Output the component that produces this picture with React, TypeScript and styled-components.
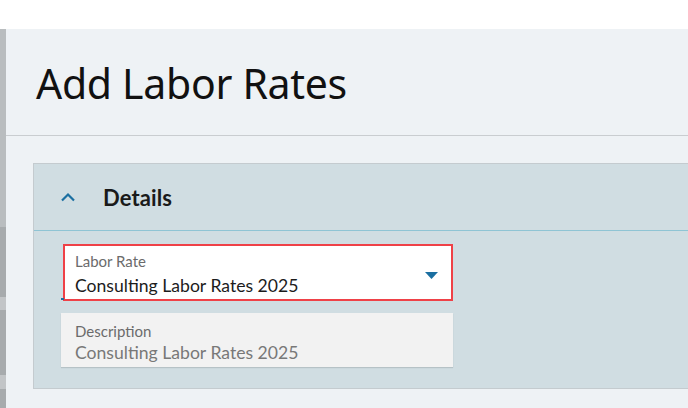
import React from "react";
import styled, { createGlobalStyle } from "styled-components";

const GlobalStyle = createGlobalStyle`
  html, body {
    margin: 0;
    padding: 0;
    background: #ffffff;
  }
  body {
    font-family: "Lato", "Noto Sans", sans-serif;
    overflow: hidden;
  }
`;

const TopBar = styled.div`
  height: 29px;
  background: #ffffff;
`;

const Shell = styled.div`
  display: flex;
  height: 379px;
  overflow: hidden;
`;

const LeftRail = styled.div`
  width: 6px;
  display: flex;
  flex-direction: column;
  background: #b4b8ba;
`;

const RailBand = styled.div<{ $h: number; $tone: string }>`
  height: ${(p) => p.$h}px;
  background: ${(p) => p.$tone};
`;

const Main = styled.main`
  flex: 1;
  min-width: 0;
  background: #eef2f5;
`;

const PageHeader = styled.header`
  height: 106px;
  border-bottom: 1px solid #c9cdd0;
  display: flex;
  align-items: flex-start;
  padding-left: 30px;
`;

const Title = styled.h1`
  margin: 26px 0 0;
  font-family: "Noto Sans", "Open Sans", sans-serif;
  font-weight: 400;
  font-size: 41px;
  letter-spacing: -0.3px;
  color: #111111;
`;

const Content = styled.div`
  padding: 27px 0 0 27px;
`;

const Card = styled.section`
  width: calc(100% + 20px);
  background: #d0dde2;
  border: 1px solid #c4cbcf;
  box-sizing: border-box;
`;

const CardHeader = styled.div`
  height: 66px;
  display: flex;
  align-items: center;
  border-bottom: 1px solid #8fc4d4;
  padding-left: 26px;
`;

const Chevron = styled.svg`
  width: 16px;
  height: 10px;
  margin-right: 27px;
  flex-shrink: 0;
`;

const CardTitle = styled.h2`
  margin: 0;
  font-size: 22px;
  font-weight: 700;
  color: #1a1a1a;
  letter-spacing: 0.1px;
`;

const CardBody = styled.div`
  padding: 13px 0 21px 27px;
  display: flex;
  flex-direction: column;
  gap: 12px;
`;

const SelectField = styled.div`
  position: relative;
  width: 390px;
  height: 57px;
  margin-left: 2px;
  box-sizing: border-box;
  border: 2px solid #ef4147;
  background: #ffffff;
  padding: 4px 10px 0;
  display: flex;
  align-items: flex-start;

  &::before {
    content: "";
    position: absolute;
    left: -4px;
    bottom: -1px;
    width: 3px;
    height: 2px;
    background: #1e6fa3;
  }
`;

const TextField = styled.div`
  width: 392px;
  height: 54px;
  box-sizing: border-box;
  background: #f2f2f2;
  box-shadow: 0 1px 1px rgba(0, 0, 0, 0.12);
  padding: 7px 14px 0;
`;

const FieldText = styled.div`
  flex: 1;
`;

const Label = styled.div`
  font-size: 15px;
  line-height: 22px;
  color: #6b6b6b;
`;

const Value = styled.div<{ $muted?: boolean; $offset?: number }>`
  margin-top: ${(p) => p.$offset ?? 0}px;
  font-size: 17.6px;
  line-height: 22px;
  color: ${(p) => (p.$muted ? "#787878" : "#1c1c1c")};
`;

const Caret = styled.svg`
  align-self: center;
  width: 13px;
  height: 7px;
  margin-right: 3px;
  margin-top: 2px;
`;

export default function App() {
  return (
    <>
      <GlobalStyle />
      <TopBar />
      <Shell>
        <LeftRail>
          <RailBand $h={198} $tone="#b9bdbf" />
          <RailBand $h={70} $tone="#a7abad" />
          <RailBand $h={13} $tone="#c2c5c7" />
          <RailBand $h={65} $tone="#a7abad" />
          <RailBand $h={14} $tone="#c2c5c7" />
          <RailBand $h={19} $tone="#a7abad" />
        </LeftRail>
        <Main>
          <PageHeader>
            <Title>Add Labor Rates</Title>
          </PageHeader>
          <Content>
            <Card>
              <CardHeader>
                <Chevron viewBox="0 0 16 10">
                  <path
                    d="M2 8.5 L8 2.5 L14 8.5"
                    fill="none"
                    stroke="#1b6fa1"
                    strokeWidth="2.2"
                  />
                </Chevron>
                <CardTitle>Details</CardTitle>
              </CardHeader>
              <CardBody>
                <SelectField>
                  <FieldText>
                    <Label>Labor Rate</Label>
                    <Value $offset={3}>Consulting Labor Rates 2025</Value>
                  </FieldText>
                  <Caret viewBox="0 0 13 7">
                    <path d="M0 0 H13 L6.5 7 Z" fill="#1b6fa1" />
                  </Caret>
                </SelectField>
                <TextField>
                  <Label>Description</Label>
                  <Value $muted>Consulting Labor Rates 2025</Value>
                </TextField>
              </CardBody>
            </Card>
          </Content>
        </Main>
      </Shell>
    </>
  );
}
